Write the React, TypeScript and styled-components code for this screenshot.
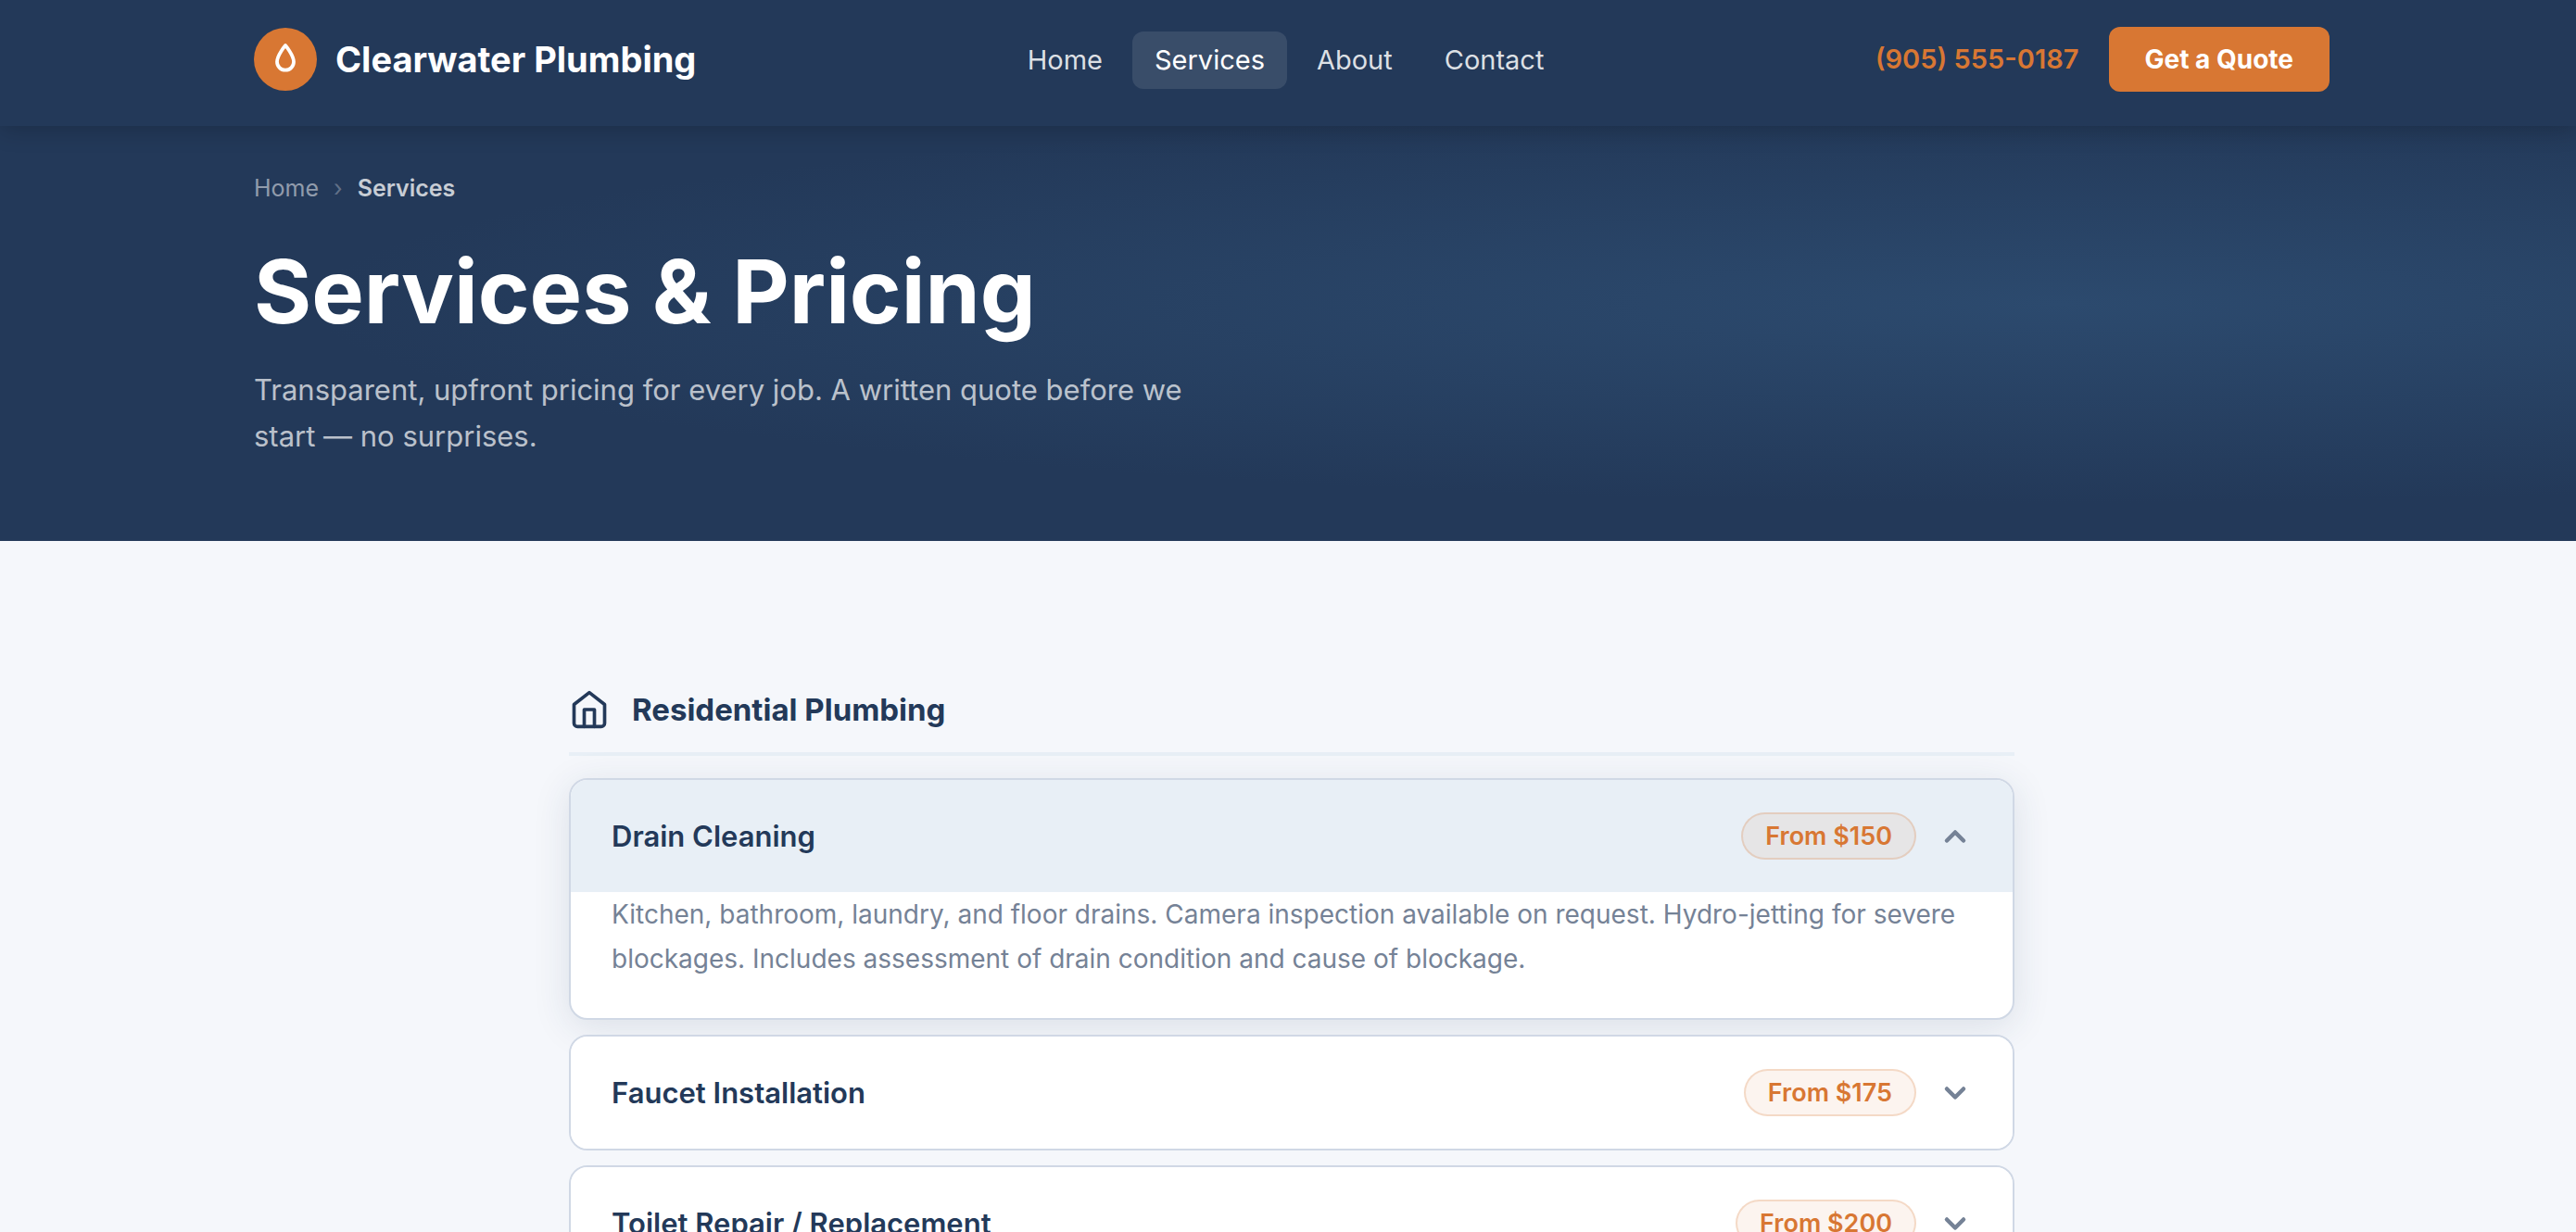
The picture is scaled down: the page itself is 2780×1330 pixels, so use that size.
import React, { useState } from "react";
import styled, { createGlobalStyle } from "styled-components";

const navy = "#233959";
const orange = "#d87733";
const mist = "#e8eff6";
const line = "#d0d8e5";
const slate = "#758296";

const GlobalStyle = createGlobalStyle`
  * { box-sizing: border-box; }
  body {
    margin: 0;
    background: #f5f7fb;
    color: ${navy};
    font-family: Inter, "Liberation Sans", sans-serif;
    -webkit-font-smoothing: antialiased;
  }
  h1, h2, h3, p, ul, ol { margin: 0; padding: 0; }
  ul, ol { list-style: none; }
  a { color: inherit; text-decoration: none; }
  button { font-family: inherit; cursor: pointer; border: 0; }
`;

const Header = styled.header`
  position: relative;
  z-index: 1;
  padding: 29px 0 37px 8px;
  background: ${navy};
  box-shadow: 0 4px 24px rgba(0, 0, 0, 0.2);
`;

const Container = styled.div`
  width: 100%;
  max-width: 2240px;
  margin: 0 auto;
`;

const HeaderRow = styled(Container)`
  display: flex;
  align-items: center;
  justify-content: space-between;
`;

const Brand = styled.a`
  display: flex;
  align-items: center;
  gap: 20px;
  color: #fff;
  font-size: 38px;
  line-height: 48px;
  font-weight: 700;
`;

const BrandMark = styled.span`
  display: grid;
  place-items: center;
  width: 68px;
  height: 68px;
  border-radius: 50%;
  background: ${orange};
`;

const NavList = styled.ul`
  display: flex;
  align-items: center;
  gap: 8px;
  padding-top: 2px;
`;

const NavLink = styled.a<{ $active?: boolean }>`
  display: block;
  padding: 13px 24px;
  border-radius: 12px;
  font-size: 29px;
  line-height: 36px;
  font-weight: 400;
  color: ${(p) => (p.$active ? "#fff" : "rgba(255, 255, 255, 0.85)")};
  background: ${(p) => (p.$active ? "rgba(255, 255, 255, 0.1)" : "transparent")};
`;

const Actions = styled.div`
  display: flex;
  align-items: center;
  gap: 32px;
`;

const Phone = styled.a`
  color: ${orange};
  font-size: 29px;
  line-height: 36px;
  font-weight: 600;
`;

const QuoteButton = styled.button`
  padding: 17px 39px;
  border-radius: 12px;
  background: ${orange};
  color: #fff;
  font-size: 28px;
  line-height: 36px;
  font-weight: 700;
`;

const Hero = styled.section`
  padding: 47px 0 88px 8px;
  background:
    radial-gradient(ellipse 68% 48% at 80% 43%, #2c4a6e 0%, rgba(44, 74, 110, 0) 100%),
    ${navy};
  color: #fff;
`;

const Crumbs = styled.ol`
  display: flex;
  align-items: center;
  gap: 16px;
  font-size: 25px;
  line-height: 40px;
`;

const Crumb = styled.li<{ $current?: boolean }>`
  display: flex;
  gap: 16px;
  font-weight: ${(p) => (p.$current ? 600 : 400)};
  color: rgba(255, 255, 255, ${(p) => (p.$current ? 0.75 : 0.5)});
`;

const CrumbDivider = styled.span`
  color: rgba(255, 255, 255, 0.3);
`;

const Title = styled.h1`
  margin-top: 40px;
  font-size: 95px;
  line-height: 104px;
  font-weight: 700;
`;

const Lead = styled.p`
  max-width: 1040px;
  margin-top: 29px;
  font-size: 31px;
  line-height: 50px;
  color: rgba(255, 255, 255, 0.7);
`;

const Services = styled.main`
  padding: 160px 0 160px 8px;
`;

const Category = styled.section`
  width: 100%;
  max-width: 1560px;
  margin: 0 auto;
`;

const CategoryHeading = styled.div`
  display: flex;
  align-items: center;
  gap: 24px;
  margin-bottom: 24px;
  padding-bottom: 24px;
  border-bottom: 4px solid ${mist};
`;

const CategoryTitle = styled.h2`
  font-size: 33px;
  line-height: 44px;
  font-weight: 700;
`;

const ServiceList = styled.div`
  display: grid;
  gap: 16px;
`;

const Card = styled.article<{ $open: boolean }>`
  position: relative;
  z-index: ${(p) => (p.$open ? 0 : 1)};
  overflow: hidden;
  border: 2px solid ${line};
  border-radius: 20px;
  background: #fff;
  box-shadow: ${(p) => (p.$open ? "0 8px 40px rgba(35, 57, 89, 0.12)" : "none")};
`;

const CardToggle = styled.button<{ $open: boolean }>`
  display: flex;
  align-items: center;
  gap: 24px;
  width: 100%;
  padding: 35px 44px;
  background: ${(p) => (p.$open ? mist : "#fff")};
  color: ${navy};
  text-align: left;
`;

const CardName = styled.span`
  flex: 1;
  font-size: 31px;
  line-height: 44px;
  font-weight: 600;
`;

const Price = styled.span`
  padding: 7px 24px;
  border: 2px solid rgba(216, 119, 51, 0.22);
  border-radius: 26px;
  background: rgba(216, 119, 51, 0.08);
  color: ${orange};
  font-size: 27px;
  line-height: 33px;
  font-weight: 600;
`;

const Chevron = styled.svg<{ $open: boolean }>`
  display: block;
  color: ${slate};
  transform: rotate(${(p) => (p.$open ? 180 : 0)}deg);
`;

const Description = styled.p`
  padding: 0 44px 40px;
  font-size: 28px;
  line-height: 48px;
  color: ${slate};
`;

const pages = ["Home", "Services", "About", "Contact"];

const residential = [
  {
    name: "Drain Cleaning",
    price: "From $150",
    text: "Kitchen, bathroom, laundry, and floor drains. Camera inspection available on request. Hydro-jetting for severe blockages. Includes assessment of drain condition and cause of blockage.",
  },
  { name: "Faucet Installation", price: "From $175", text: "" },
  { name: "Toilet Repair / Replacement", price: "From $200", text: "" },
];

function DropIcon() {
  return (
    <svg width="36" height="36" viewBox="0 0 24 24" fill="none" stroke="#fff" strokeWidth="2.5" strokeLinejoin="round" aria-hidden="true">
      <path d="M12 2 C12 2 6 9 6 13.8 a6 6 0 0 0 12 0 C18 9 12 2 12 2 z" />
    </svg>
  );
}

function HouseIcon() {
  return (
    <svg width="44" height="44" viewBox="0 0 24 24" fill="none" stroke="currentColor" strokeWidth="2" strokeLinecap="round" strokeLinejoin="round" aria-hidden="true">
      <path d="M3 9l9-7 9 7v11a2 2 0 0 1-2 2H5a2 2 0 0 1-2-2z" />
      <path d="M9 22V12h6v10" />
    </svg>
  );
}

export default function App() {
  const [open, setOpen] = useState("Drain Cleaning");

  return (
    <>
      <GlobalStyle />
      <Header>
        <HeaderRow>
          <Brand href="#home">
            <BrandMark>
              <DropIcon />
            </BrandMark>
            Clearwater Plumbing
          </Brand>
          <nav aria-label="Main">
            <NavList>
              {pages.map((page) => (
                <li key={page}>
                  <NavLink href={`#${page.toLowerCase()}`} $active={page === "Services"}>
                    {page}
                  </NavLink>
                </li>
              ))}
            </NavList>
          </nav>
          <Actions>
            <Phone href="tel:+19055550187">(905) 555-0187</Phone>
            <QuoteButton type="button">Get a Quote</QuoteButton>
          </Actions>
        </HeaderRow>
      </Header>

      <Hero>
        <Container>
          <nav aria-label="Breadcrumb">
            <Crumbs>
              <Crumb>
                <a href="#home">Home</a>
                <CrumbDivider aria-hidden="true">›</CrumbDivider>
              </Crumb>
              <Crumb $current aria-current="page">
                Services
              </Crumb>
            </Crumbs>
          </nav>
          <Title>Services &amp; Pricing</Title>
          <Lead>
            Transparent, upfront pricing for every job. A written quote before we start — no surprises.
          </Lead>
        </Container>
      </Hero>

      <Services>
        <Category>
          <CategoryHeading>
            <HouseIcon />
            <CategoryTitle>Residential Plumbing</CategoryTitle>
          </CategoryHeading>
          <ServiceList>
            {residential.map(({ name, price, text }) => {
              const isOpen = open === name;
              return (
                <Card key={name} $open={isOpen}>
                  <h3>
                    <CardToggle
                      type="button"
                      $open={isOpen}
                      aria-expanded={isOpen}
                      onClick={() => setOpen(isOpen ? "" : name)}
                    >
                      <CardName>{name}</CardName>
                      <Price>{price}</Price>
                      <Chevron
                        $open={isOpen}
                        width="36"
                        height="36"
                        viewBox="0 0 24 24"
                        fill="none"
                        stroke="currentColor"
                        strokeWidth="3"
                        strokeLinecap="round"
                        strokeLinejoin="round"
                        aria-hidden="true"
                      >
                        <path d="M6 9l6 6 6-6" />
                      </Chevron>
                    </CardToggle>
                  </h3>
                  {isOpen && text && <Description>{text}</Description>}
                </Card>
              );
            })}
          </ServiceList>
        </Category>
      </Services>
    </>
  );
}
